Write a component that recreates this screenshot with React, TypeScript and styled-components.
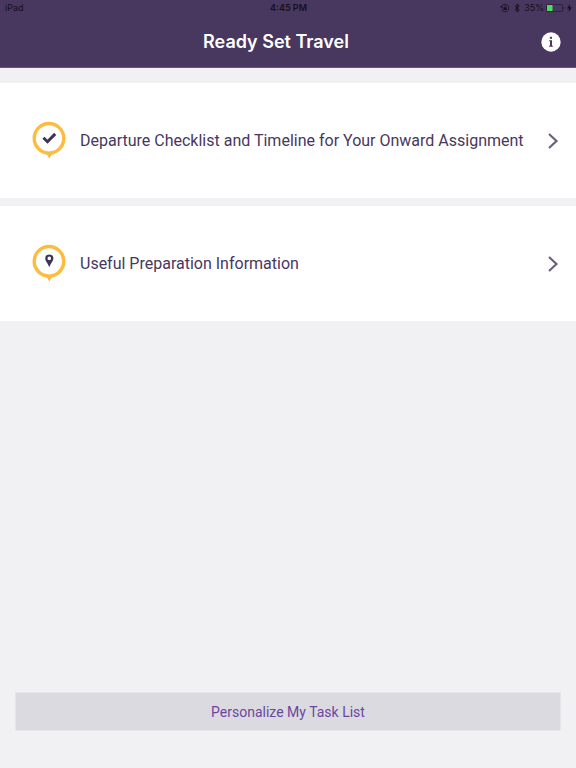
import React from "react";
import styled, { createGlobalStyle } from "styled-components";

const GlobalStyle = createGlobalStyle`
  * { box-sizing: border-box; }
  body {
    margin: 0;
    background: #f1f1f4;
    color: #48375f;
    font-family: Inter, "Liberation Sans", sans-serif;
  }
  button { font-family: inherit; }
`;

const Screen = styled.div`
  min-height: 100vh;
  display: flex;
  flex-direction: column;
  background: #f1f1f4;
`;

const Header = styled.header`
  background: #48375f;
  border-bottom: 1px solid #66577d;
`;

const StatusBar = styled.div`
  display: grid;
  grid-template-columns: 1fr auto 1fr;
  align-items: center;
  height: 16px;
  padding: 0 4px 0 5px;
  color: #15101c;
  font-size: 9px;
  line-height: 16px;
`;

const Time = styled.span`
  font-weight: 600;
`;

const StatusIcons = styled.div`
  display: flex;
  justify-content: flex-end;
  align-items: center;
  gap: 4px;
`;

const Power = styled.div`
  display: flex;
  align-items: center;
  gap: 2px;
`;

const TitleBar = styled.div`
  display: flex;
  align-items: center;
  gap: 4px;
  height: 51px;
  padding: 0 15px;
`;

const Title = styled.h1`
  flex: 1;
  margin: 0;
  color: #fff;
  font-size: 18px;
  line-height: 24px;
  font-weight: 600;
  text-align: center;
`;

const InfoButton = styled.button`
  display: flex;
  padding: 0;
  border: 0;
  background: none;
  cursor: pointer;
`;

const Menu = styled.nav`
  display: flex;
  flex-direction: column;
  gap: 8px;
  margin-top: 15px;
`;

const MenuRow = styled.button`
  display: flex;
  align-items: center;
  width: 100%;
  min-height: 115px;
  padding: 0 17px 0 32px;
  border: 0;
  background: #fff;
  color: #48375f;
  font-family: Roboto, "Liberation Sans", sans-serif;
  font-size: 16px;
  line-height: 24px;
  text-align: left;
  cursor: pointer;
`;

const RowLabel = styled.span`
  flex: 1;
  margin-left: 14px;
`;

const Footer = styled.footer`
  margin-top: auto;
  padding: 16px 15px 37px;
`;

const PersonalizeButton = styled.button`
  display: block;
  width: 100%;
  height: 39px;
  border: 1px solid #e6e5ea;
  background: #dbdae1;
  color: #6b469f;
  font-family: Roboto, "Liberation Sans", sans-serif;
  font-size: 14px;
  line-height: 20px;
  cursor: pointer;
`;

const LockIcon = () => (
  <svg width="10" height="10" viewBox="0 0 10 10" fill="none" stroke="currentColor" aria-hidden="true">
    <path d="M1.4 3.6a3.8 3.8 0 1 1 0 2.8" strokeWidth=".8" />
    <path d="M0 3.2l1.3 2 1.7-1.6z" fill="currentColor" stroke="none" />
    <rect x="3.3" y="4.5" width="3.4" height="2.5" fill="currentColor" stroke="none" />
    <path d="M4 4.7V4a1 1 0 0 1 2 0v.7" strokeWidth=".7" />
  </svg>
);

const BluetoothIcon = () => (
  <svg width="6" height="10" viewBox="1 0 6 10" fill="none" stroke="currentColor" aria-hidden="true">
    <path d="M1.7 2.8l4.5 4.1L4 9V1l2.2 2.1-4.5 4.1" />
  </svg>
);

const BatteryIcon = () => (
  <svg width="19" height="8" viewBox="0 0 19 8" aria-hidden="true">
    <rect x=".5" y=".5" width="16" height="7" rx="1" fill="none" stroke="#241b30" strokeWidth=".7" />
    <rect x="1" y="1" width="5.5" height="6" fill="#4bdc62" />
    <path d="M17.5 2.7a1.5 1.5 0 0 1 0 2.6z" fill="#241b30" />
  </svg>
);

const BoltIcon = () => (
  <svg width="5" height="8" viewBox="0 0 5 8" fill="currentColor" aria-hidden="true">
    <path d="M3 0L0 4.5h2L1.6 8 5 3.3H2.8z" />
  </svg>
);

const InfoIcon = () => (
  <svg width="20" height="20" viewBox="0 0 20 20" aria-hidden="true">
    <circle cx="10" cy="10" r="9.7" fill="#fff" />
    <rect x="8.8" y="4.8" width="2.2" height="2" fill="#48375f" />
    <path d="M8.2 8.2H11v5.5h.9v1H8.1v-1H9V9.2h-.8z" fill="#48375f" />
  </svg>
);

const Pin = ({ children }: { children: React.ReactNode }) => (
  <svg width="34" height="40" viewBox="0 0 34 40" fill="none" aria-hidden="true">
    <path d="M11.5 31.5c3 .6 4.3 2.7 5.8 6.3 1.5-3.6 2.8-5.7 5.8-6.3z" fill="#fdbc3c" />
    <circle cx="17" cy="17.3" r="14.8" fill="#fff" stroke="#fdbc3c" strokeWidth="3.4" />
    {children}
  </svg>
);

const Check = () => (
  <path d="M11.4 16.7l4.1 4 7.7-7.8" stroke="#3e3359" strokeWidth="3" />
);

const Place = () => (
  <path
    fill="#3e3359"
    fillRule="evenodd"
    d="M17.3 10.4a4.1 4.1 0 0 0-4.1 4.1c0 2.2 2.6 4.6 4.1 8.7 1.5-4.1 4.1-6.5 4.1-8.7a4.1 4.1 0 0 0-4.1-4.1zm0 2.2a1.8 1.8 0 1 1 0 3.6 1.8 1.8 0 0 1 0-3.6z"
  />
);

const Chevron = () => (
  <svg width="12" height="16" viewBox="0 0 12 16" fill="none" aria-hidden="true">
    <path d="M2 1l7.5 7L2 15" stroke="#6d607f" strokeWidth="2.2" />
  </svg>
);

const items = [
  { label: "Departure Checklist and Timeline for Your Onward Assignment", glyph: <Check /> },
  { label: "Useful Preparation Information", glyph: <Place /> },
];

export default function App() {
  return (
    <Screen>
      <GlobalStyle />
      <Header>
        <StatusBar>
          <span>iPad</span>
          <Time>4:45 PM</Time>
          <StatusIcons>
            <LockIcon />
            <BluetoothIcon />
            <Power>
              <span>35%</span>
              <BatteryIcon />
              <BoltIcon />
            </Power>
          </StatusIcons>
        </StatusBar>
        <TitleBar>
          <Title>Ready Set Travel</Title>
          <InfoButton type="button" aria-label="Information">
            <InfoIcon />
          </InfoButton>
        </TitleBar>
      </Header>
      <Menu>
        {items.map((item) => (
          <MenuRow key={item.label} type="button">
            <Pin>{item.glyph}</Pin>
            <RowLabel>{item.label}</RowLabel>
            <Chevron />
          </MenuRow>
        ))}
      </Menu>
      <Footer>
        <PersonalizeButton type="button">Personalize My Task List</PersonalizeButton>
      </Footer>
    </Screen>
  );
}
